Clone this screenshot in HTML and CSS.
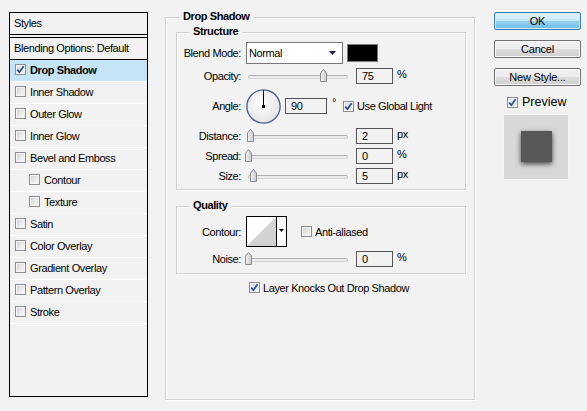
FILE: index.html
```html
<!DOCTYPE html>
<html>
<head>
<meta charset="utf-8">
<title>Layer Style</title>
<link rel="stylesheet" href="styles.css">
</head>
<body>
<div class="dialog">
  <div class="styles-panel">
    <div class="panel-head">Styles</div>
    <div class="panel-gap"></div>
    <div class="panel-blend">Blending Options: Default</div>
    <ul class="style-list">
      <li class="item selected"><span class="cb checked"><svg viewBox="0 0 11 11" width="11" height="11"><path d="M2.2 5.6 L4.4 8.2 L8.6 2.2" fill="none" stroke="#2c4c8f" stroke-width="1.7"/></svg></span><b>Drop Shadow</b></li>
      <li class="item"><span class="cb"></span>Inner Shadow</li>
      <li class="item"><span class="cb"></span>Outer Glow</li>
      <li class="item"><span class="cb"></span>Inner Glow</li>
      <li class="item"><span class="cb"></span>Bevel and Emboss</li>
      <li class="item sub"><span class="cb"></span>Contour</li>
      <li class="item sub"><span class="cb"></span>Texture</li>
      <li class="item"><span class="cb"></span>Satin</li>
      <li class="item"><span class="cb"></span>Color Overlay</li>
      <li class="item"><span class="cb"></span>Gradient Overlay</li>
      <li class="item"><span class="cb"></span>Pattern Overlay</li>
      <li class="item"><span class="cb"></span>Stroke</li>
    </ul>
  </div>

  <div class="main group">
    <div class="legend">Drop Shadow</div>

    <div class="group structure">
      <div class="legend">Structure</div>
      <div class="row r-blend">
        <span class="lbl">Blend Mode:</span>
        <div class="select"><span>Normal</span><svg class="sel-arrow" viewBox="0 0 7 4" width="7" height="4"><path d="M0 0 H7 L3.5 4 Z" fill="#1c1f5e"/></svg></div>
        <div class="swatch"></div>
      </div>
      <div class="row r-std">
        <span class="lbl">Opacity:</span>
        <div class="slider"><div class="track"></div><svg class="thumb" style="left:72px" viewBox="0 0 7 13" width="7" height="13"><defs><linearGradient id="tg1" x1="0" y1="0" x2="1" y2="0"><stop offset="0" stop-color="#f4f4f4"/><stop offset="1" stop-color="#c9c9c9"/></linearGradient></defs><path d="M0.5 4 L3.5 0.5 L6.5 4 V12.5 H0.5 Z" fill="url(#tg1)" stroke="#8a8a8a"/></svg></div>
        <div class="num">75</div><span class="unit">%</span>
      </div>
      <div class="row r-angle">
        <span class="lbl">Angle:</span>
        <svg class="dial" viewBox="0 0 35 35" width="35" height="35"><defs><radialGradient id="dg" cx="0.45" cy="0.4" r="0.6"><stop offset="0" stop-color="#ffffff"/><stop offset="1" stop-color="#e4e4e6"/></radialGradient></defs><circle cx="17.5" cy="17.5" r="16.6" fill="url(#dg)" stroke="#4a5c8c" stroke-width="1.3"/><line x1="17.5" y1="17.5" x2="17.5" y2="1.5" stroke="#000" stroke-width="1"/><rect x="16" y="16" width="3" height="3" fill="#000"/></svg>
        <div class="num angle">90</div><span class="deg">°</span>
        <span class="cb checked gl"><svg viewBox="0 0 11 11" width="11" height="11"><path d="M2.2 5.6 L4.4 8.2 L8.6 2.2" fill="none" stroke="#2c4c8f" stroke-width="1.7"/></svg></span><span class="cb-text">Use Global Light</span>
      </div>
      <div class="row r-std">
        <span class="lbl">Distance:</span>
        <div class="slider"><div class="track"></div><svg class="thumb" style="left:-1px" viewBox="0 0 7 13" width="7" height="13"><path d="M0.5 4 L3.5 0.5 L6.5 4 V12.5 H0.5 Z" fill="url(#tg1)" stroke="#8a8a8a"/></svg></div>
        <div class="num">2</div><span class="unit">px</span>
      </div>
      <div class="row r-std">
        <span class="lbl">Spread:</span>
        <div class="slider"><div class="track"></div><svg class="thumb" style="left:-3px" viewBox="0 0 7 13" width="7" height="13"><path d="M0.5 4 L3.5 0.5 L6.5 4 V12.5 H0.5 Z" fill="url(#tg1)" stroke="#8a8a8a"/></svg></div>
        <div class="num">0</div><span class="unit">%</span>
      </div>
      <div class="row r-std">
        <span class="lbl">Size:</span>
        <div class="slider"><div class="track"></div><svg class="thumb" style="left:2px" viewBox="0 0 7 13" width="7" height="13"><path d="M0.5 4 L3.5 0.5 L6.5 4 V12.5 H0.5 Z" fill="url(#tg1)" stroke="#8a8a8a"/></svg></div>
        <div class="num">5</div><span class="unit">px</span>
      </div>
    </div>

    <div class="group quality">
      <div class="legend">Quality</div>
      <div class="row r-contour">
        <span class="lbl">Contour:</span>
        <svg class="contour" viewBox="0 0 41 31" width="41" height="31"><rect x="0.5" y="0.5" width="40" height="30" fill="#fff" stroke="#000"/><path d="M1 30 L30 1 V30 Z" fill="#d2d2d2"/><line x1="30.5" y1="0" x2="30.5" y2="31" stroke="#000"/><path d="M33 13 H38 L35.5 16 Z" fill="#000"/></svg>
        <span class="cb aa"></span><span class="cb-text">Anti-aliased</span>
      </div>
      <div class="row r-std">
        <span class="lbl">Noise:</span>
        <div class="slider"><div class="track"></div><svg class="thumb" style="left:-3px" viewBox="0 0 7 13" width="7" height="13"><path d="M0.5 4 L3.5 0.5 L6.5 4 V12.5 H0.5 Z" fill="url(#tg1)" stroke="#8a8a8a"/></svg></div>
        <div class="num">0</div><span class="unit">%</span>
      </div>
    </div>

    <div class="row knock">
      <span class="cb checked"><svg viewBox="0 0 11 11" width="11" height="11"><path d="M2.2 5.6 L4.4 8.2 L8.6 2.2" fill="none" stroke="#2c4c8f" stroke-width="1.7"/></svg></span><span class="cb-text">Layer Knocks Out Drop Shadow</span>
    </div>
  </div>

  <div class="side">
    <button class="btn ok">OK</button>
    <button class="btn">Cancel</button>
    <button class="btn">New Style...</button>
    <div class="preview-row">
      <span class="cb checked"><svg viewBox="0 0 11 11" width="11" height="11"><path d="M2.2 5.6 L4.4 8.2 L8.6 2.2" fill="none" stroke="#2c4c8f" stroke-width="1.7"/></svg></span><span class="preview-label">Preview</span>
    </div>
    <div class="preview-box"><div class="preview-square"></div></div>
  </div>
</div>
</body>
</html>
```

FILE: styles.css
```css
* { box-sizing: border-box; margin: 0; padding: 0; }
html, body { background: #f2f2f2; }
body {
  font-family: "Liberation Sans", Arial, sans-serif;
  font-size: 11px;
  letter-spacing: -0.4px;
  color: #000;
  width: 587px;
  height: 411px;
  overflow: hidden;
}
.dialog {
  display: flex;
  align-items: flex-start;
  padding: 12px 0 0 9px;
}

/* ---------- left styles list ---------- */
.styles-panel {
  flex: none;
  width: 139px;
  height: 385px;
  border: 1px solid #000;
}
.panel-head {
  height: 22px;
  line-height: 21px;
  padding-left: 4px;
  border-bottom: 1px solid #000;
}
.panel-gap {
  height: 3px;
  border-bottom: 1px solid #000;
}
.panel-blend {
  height: 22px;
  line-height: 20px;
  padding-left: 4px;
  border-bottom: 1px solid #000;
}
.style-list { list-style: none; }
.item {
  height: 22px;
  display: flex;
  align-items: center;
  gap: 4px;
  padding-left: 5px;
  padding-bottom: 2px;
  border-bottom: 1px solid #fff;
}
.item.sub { padding-left: 19px; }
.item.selected { background: #c5e4f6; }

/* ---------- checkbox ---------- */
.cb {
  flex: none;
  display: inline-block;
  width: 11px;
  height: 11px;
  border: 1px solid #8c8e8f;
  background: linear-gradient(135deg, #d2d2d2 0%, #ececec 60%, #f8f8f8 100%);
  box-shadow: inset 0 0 0 1px #f4f4f4;
  position: relative;
}
.cb svg {
  position: absolute;
  left: -1px;
  top: -1px;
}
.cb.checked { background: linear-gradient(135deg, #d8dce4 0%, #f0f2f6 100%); }

/* ---------- group boxes ---------- */
.group {
  position: relative;
  border: 1px solid #d0d0d0;
  box-shadow: 1px 1px 0 #fff, inset 1px 1px 0 #fff;
}
.legend {
  position: absolute;
  top: -8px;
  left: 12px;
  padding: 0 4px;
  background: #f2f2f2;
  font-weight: bold;
  line-height: 13px;
}
.main {
  flex: none;
  margin-left: 17px;
  margin-top: 5px;
  width: 310px;
  height: 383px;
  padding: 14px 8px 0 10px;
}
.main > .legend { left: 13px; }
.structure {
  width: 290px;
  padding: 9px 0 5px 0;
}
.quality {
  width: 290px;
  margin-top: 16px;
  padding: 9px 0 6px 0;
}

.row {
  display: flex;
  align-items: center;
}
.row + .row { margin-top: 4px; }
.lbl {
  flex: none;
  width: 64px;
  margin-right: 5px;
  text-align: right;
}
.r-blend { height: 22px; }
.r-std { height: 16px; }
.r-angle { height: 36px; }
.r-contour { height: 31px; }

.select {
  width: 97px;
  height: 22px;
  border: 1px solid #767676;
  background: #fff;
  display: flex;
  align-items: center;
  justify-content: space-between;
  padding: 0 6px 0 2px;
}
.swatch {
  margin-left: 4px;
  width: 31px;
  height: 18px;
  background: #000;
  border: 1px solid #7a7a7a;
}

.slider {
  position: relative;
  margin-left: 2px;
  width: 100px;
  height: 16px;
  flex: none;
}
.track {
  position: absolute;
  left: 0;
  right: 0;
  top: 7px;
  height: 4px;
  border-radius: 2px;
  border-top: 1px solid #b0b0b0;
  border-bottom: 1px solid #d4d4d4;
  border-left: 1px solid #c4c4c4;
  border-right: 1px solid #c4c4c4;
  background: #ececec;
}
.thumb {
  position: absolute;
  top: 1px;
}
.num {
  flex: none;
  margin-left: 8px;
  width: 37px;
  height: 16px;
  border: 1px solid #555;
  padding-left: 5px;
  line-height: 14px;
}
.unit {
  margin-left: 4px;
  align-self: flex-start;
  line-height: 12px;
}
.dial { flex: none; }
.num.angle {
  margin-left: 4px;
  width: 42px;
}
.deg {
  margin-left: 5px;
  align-self: flex-start;
  margin-top: 8px;
}
.cb.gl { margin-left: 7px; }
.cb-text { margin-left: 3px; }
.contour { flex: none; }
.cb.aa { margin-left: 14px; }

.knock {
  margin-top: 7px;
  margin-left: 73px;
  height: 13px;
}

/* ---------- right column ---------- */
.side {
  flex: none;
  margin-left: 19px;
  width: 87px;
  display: flex;
  flex-direction: column;
}
.btn {
  font-family: inherit;
  font-size: 11px;
  letter-spacing: -0.2px;
  color: #000;
  height: 18px;
  margin-bottom: 10px;
  border: 1px solid #707070;
  border-radius: 2px;
  background: linear-gradient(#f2f2f2 0%, #ebebeb 50%, #dddddd 51%, #cfcfcf 100%);
  box-shadow: inset 0 0 0 1px #fbfbfb;
  line-height: 15px;
}
.btn.ok {
  border-color: #3c7fb1;
  background: linear-gradient(#e5f4fc 0%, #c4e5f6 50%, #98d1ef 51%, #6cbde6 100%);
  box-shadow: inset 0 0 0 1px #cdeaf9;
}
.preview-row {
  display: flex;
  align-items: center;
  height: 12px;
  padding-left: 13px;
}
.preview-label {
  margin-left: 4px;
  font-size: 12.5px;
  letter-spacing: 0;
}
.preview-box {
  margin-top: 6px;
  margin-left: 9px;
  width: 66px;
  height: 66px;
  background: #d8d8d8;
  border: 1px solid #f4f4f4;
  display: flex;
  align-items: center;
  justify-content: center;
  padding-bottom: 1px;
}
.preview-square {
  width: 31px;
  height: 31px;
  background: #575757;
  box-shadow: 0 2px 5px rgba(0, 0, 0, 0.7);
}
```
